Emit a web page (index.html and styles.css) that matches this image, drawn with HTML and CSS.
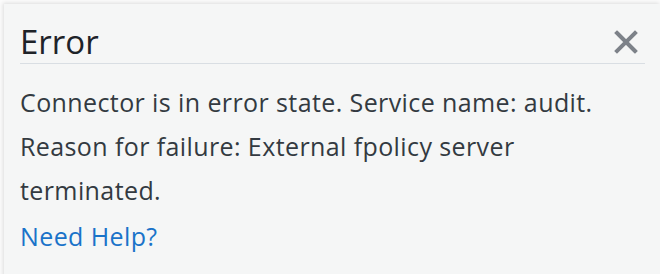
FILE: index.html
```html
<!DOCTYPE html>
<html>
<head>
<meta charset="utf-8">
<link rel="stylesheet" href="styles.css">
</head>
<body>
<div class="page">
  <div class="popover">
    <div class="header">
      <h2 class="title">Error</h2>
      <button class="close" aria-label="Close">
        <svg width="24" height="24" viewBox="0 0 24 24"><path d="M3 3 L21 21 M21 3 L3 21" stroke="#7d8289" stroke-width="4" stroke-linecap="square" fill="none"/></svg>
      </button>
    </div>
    <p class="message">Connector is in error state. Service name: audit. Reason for failure: External fpolicy server terminated.</p>
    <a class="help" href="#">Need Help?</a>
  </div>
</div>
</body>
</html>
```
FILE: styles.css
```css
html, body {
  margin: 0;
  padding: 0;
  background: #ffffff;
}
.page {
  width: 660px;
  height: 274px;
  overflow: hidden;
  position: relative;
  background: #fbfbfb;
}
.popover {
  margin: 4px 0 0 4px;
  height: 280px;
  background: #f5f6f6;
  box-shadow: -1px -1px 4px rgba(0,0,0,0.12);
  padding: 0 15px 0 16px;
  font-family: "Open Sans", "Lato", sans-serif;
}
.header {
  display: flex;
  align-items: center;
  justify-content: space-between;
  height: 59px;
  border-bottom: 1px solid #d9dee3;
  padding-top: 0;
}
.title {
  margin: 0;
  font-size: 33px;
  font-weight: 400;
  color: #1e2329;
  padding-top: 16px;
}
.close {
  background: none;
  border: 0;
  padding: 0;
  margin-right: 7px;
  margin-top: 16px;
  width: 24px;
  height: 24px;
}
.message {
  margin: 16px 0 0;
  font-size: 25px;
  letter-spacing: 0.4px;
  line-height: 44px;
  color: #333a41;
  width: 600px;
}
.help {
  display: block;
  margin-top: 4px;
  font-size: 25px;
  letter-spacing: 0.4px;
  line-height: 40px;
  color: #1a73c9;
  text-decoration: none;
}
```
